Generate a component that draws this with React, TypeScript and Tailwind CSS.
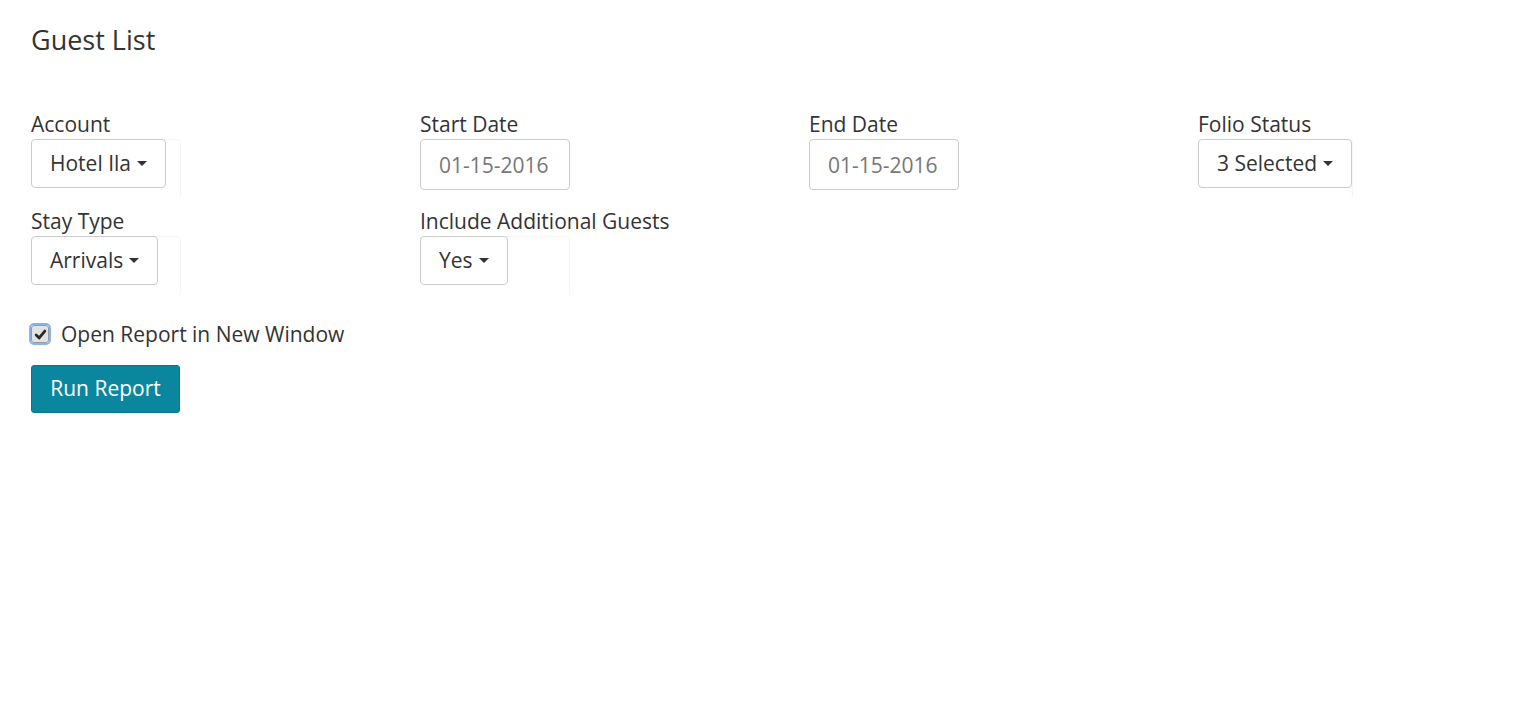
import React from "react";

function Caret() {
  return (
    <span className="ml-[6px] inline-block h-0 w-0 border-x-[5px] border-t-[5px] border-x-transparent border-t-[#333]" />
  );
}

function Dropdown({ label, value }: { label: string; value: string }) {
  return (
    <div className="flex flex-col items-start">
      <label className="text-[21px] leading-[30px] text-[#333]">{label}</label>
      <div className="h-[60px] min-w-[150px] rounded-[4px] border-t border-r border-[#f5f5f5]">
        <button className="-mt-px flex h-[49px] items-center whitespace-nowrap rounded-[4px] border border-[#cccccc] bg-white px-[18px] text-[21px] text-[#333]">
          {value}
          <Caret />
        </button>
      </div>
    </div>
  );
}

function DateField({ label, value }: { label: string; value: string }) {
  return (
    <div className="flex flex-col">
      <label className="text-[21px] leading-[30px] text-[#333]">{label}</label>
      <input
        readOnly
        value={value}
        className="h-[51px] w-[150px] rounded-[4px] border border-[#cccccc] bg-white px-[18px] text-[21px] text-[#777] outline-none"
      />
    </div>
  );
}

export default function App() {
  return (
    <div
      className="min-h-screen bg-white px-[31px] pt-[21px] text-[#333]"
      style={{ fontFamily: "'Open Sans', 'Noto Sans', sans-serif" }}
    >
      <h1 className="text-[27px] leading-[38px] text-[#333]">Guest List</h1>

      <div className="mt-[50px] grid grid-cols-[389px_389px_389px_300px]">
        <Dropdown label="Account" value="Hotel Ila" />
        <DateField label="Start Date" value="01-15-2016" />
        <DateField label="End Date" value="01-15-2016" />
        <Dropdown label="Folio Status" value="3 Selected" />
      </div>

      <div className="mt-[7px] grid grid-cols-[389px_389px]">
        <Dropdown label="Stay Type" value="Arrivals" />
        <Dropdown label="Include Additional Guests" value="Yes" />
      </div>

      <label className="mt-[23px] flex items-center gap-[12px] text-[21px] leading-[30px] text-[#333]">
        <span className="flex h-[18px] w-[18px] items-center justify-center rounded-[3px] border border-[#9a9a9a] bg-[#e2e2e2] outline-2 outline-[#8ab1f0]">
          <svg viewBox="0 0 12 12" className="h-[13px] w-[13px]">
            <path d="M2 6.5 L4.8 9.2 L10 2.8" fill="none" stroke="#2a2a2a" strokeWidth="2.6" strokeLinecap="round" strokeLinejoin="round" />
          </svg>
        </span>
        Open Report in New Window
      </label>

      <button className="mt-[16px] h-[48px] w-[149px] rounded-[3px] border border-[#07788c] bg-[#0a879e] text-[21px] text-white">
        Run Report
      </button>
    </div>
  );
}
